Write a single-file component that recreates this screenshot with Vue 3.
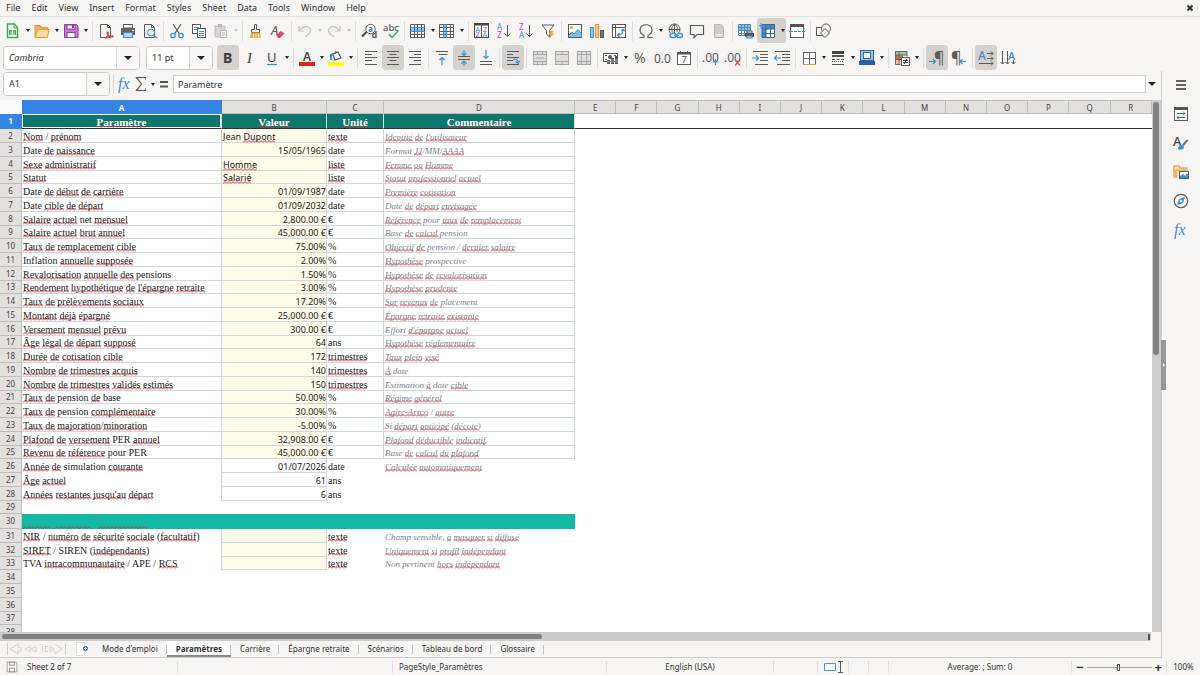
<script setup>
const menus = ['File', 'Edit', 'View', 'Insert', 'Format', 'Styles', 'Sheet', 'Data', 'Tools', 'Window', 'Help']

const G = '#5a5a5a'
const B = '#3d8fd1'
const line = (d, c = G, w = 1) => `<path d="${d}" fill="none" stroke="${c}" stroke-width="${w}"/>`
const fill = (d, c) => `<path d="${d}" fill="${c}"/>`
const rect = (x, y, w, h, f = 'none', s = 'none') => `<rect x="${x}" y="${y}" width="${w}" height="${h}" fill="${f}" stroke="${s}"/>`
const txt = (t, x, y, size, c = G, extra = '') => `<text x="${x}" y="${y}" font-size="${size}" fill="${c}" font-family="Noto Sans, sans-serif" ${extra}>${t}</text>`
const gridLines = line('M.5 1.500h14v13H.5zM.5 4.500h14M.5 8.500h14M.5 11.500h14M4.500 1.500v13M7.500 1.500v13M11.500 1.500v13')
const fx = txt('fx', 1, 13, 16, B, 'font-style="italic" style="font-family:Liberation Serif,serif"')

const icons = {
  new: line('M2.500 1h7l3 3.500v10h-10z', '#3faa5b', 1.5) + line('M9 1v4h4', '#3faa5b') + rect(4, 7, 7, 5, '#43a85a') + line('M5 9h5M5 11h5M7.500 7v5', '#fff', 0.7) ,
  open: fill('M1 2h5l2 2h6v10H1z', '#f3ae55') + fill('M3 6h12l-1.500 8.500H1z', '#fbdca8') + line('M.8 2.500h5l2 2h6V6M3.500 6.500h11.500l-1.500 8H1.500zM1 2.500v12', '#e2993e'),
  save: fill('M1.500 1.500h12l1.500 1.500v12H1.500z', '#c67bd0') + line('M1.500 1.500h12l1.500 1.500v11.500H1.500z', '#8d3f9a') + rect(4, 2, 8, 4, '#fff', '#8d3f9a') + rect(4, 9.5, 8, 5, '#fff', '#8d3f9a') + rect(9, 2, 2, 3, '#8d3f9a'),
  pdf: line('M2.500 1.500h7l3 3v10h-10zM9.500 1.500v3h3') + line('M7 15c3-2 4-5 3-6-1-.6-1.500 1 0 3 1.500 1.600 4 2.500 5 1.500s-3-1-8 2', '#d9434e', 1.200),
  print: fill('M1 5h14v7H1z', '#616568') + rect(3.5, 1.5, 9, 3.5, '#fff', G) + rect(3.5, 9.5, 9, 5, '#b9dcf5', B) + rect(12, 7, 2, 1, '#fff'),
  preview: line('M2.500 1.500h7l3 3v10h-10zM9.500 1.500v3h3') + `<circle cx="9" cy="9.500" r="3.500" fill="#dceefa" stroke="${B}"/>` + line('M11.500 12l3.500 3', B, 1.500),
  cut: line('M4 1l6.500 10M12 1L5.500 11', G, 1.200) + `<circle cx="4" cy="12.500" r="2.200" fill="none" stroke="${B}" stroke-width="1.300"/><circle cx="12" cy="12.500" r="2.200" fill="none" stroke="${B}" stroke-width="1.300"/>`,
  copy: rect(1.5, 1.5, 8, 9, '#fff', G) + line('M3 4.500h5M3 6.500h5', B) + rect(6.5, 5.5, 8, 9, '#fff', G) + line('M8 8.500h5M8 10.500h5M8 12.500h5', B),
  paste: rect(2, 3, 10, 11, '#d6d4d2', '#c3c1bf') + rect(5, 1, 4, 3, '#b9b7b5') + rect(7.5, 7.5, 6, 7, '#f2f1f0', '#bbb9b7') + line('M9 10h3M9 12h3', '#c0bebc'),
  brush: line('M6.500 1.500h2v5h3v3h-8v-3h3z') + fill('M3 9.500h9l1 5.500H2z', '#f1ac4f') + line('M5.500 11v3.500M8 11v3.500M10.500 11v3.500', '#fff', 0.7),
  clear: txt('A', 1, 11.500, 13, G, 'font-style="italic"') + fill('M6 12l5-4 3.500 2.500L10 15H8z', '#dd4b57'),
  undo: line('M2 3v5h5M2.500 7.500C6 3 11 2.500 13 5.500c2 3.500-1 6-5 8.500', '#c6c4c2', 1.200),
  redo: line('M14 3v5H9M13.500 7.500C10 3 5 2.500 3 5.500c-2 3.500 1 6 5 8.500', '#c6c4c2', 1.200),
  find: `<circle cx="9.500" cy="6" r="4.700" fill="#fff" stroke="${G}"/>` + line('M5.500 9L1 13.500', '#444', 2) + txt('a', 7, 9, 8, B, 'font-weight="bold"') + txt('d', 10.500, 15, 9, G, 'font-weight="bold"'),
  abc: txt('abc', 0, 8, 9.5, G, 'font-weight="500"') + line('M6 11l3 3.500L15 8', '#3fb269', 1.500),
  row: rect(1, 4, 14, 4, '#8cc6ef') + gridLines + line('M.5 4.500h14M.5 8.500h14', B),
  col: rect(4, 1, 4, 14, '#8cc6ef') + gridLines + line('M4.500 1v14M7.500 1v14', B),
  sort: rect(0.5, 0.5, 14, 14, '#fff', '#444') + line('M.5 1.500h14', '#444', 2) + line('M7.500 1v14') + txt('A', 1.500, 8.500, 7, B) + txt('Z', 1.800, 14, 7, '#b14ac0') + txt('Z', 9, 8.500, 7, '#b14ac0') + txt('A', 8.700, 14, 7, B),
  az: txt('A', 1, 7, 8, B) + txt('Z', 1, 15, 8, '#b14ac0') + line('M11.500 2v11.500M8.500 10.500l3 3 3-3'),
  za: txt('Z', 1, 7, 8, '#b14ac0') + txt('A', 1, 15, 8, B) + line('M11.500 2v11.500M8.500 10.500l3 3 3-3'),
  filter: line('M2 2h12L9.500 7.500V14L6.500 11V7.500z') + fill('M10 8h4l-2 2.500h2.500L9 15.500l1.500-4H8.500z', '#f1a03d'),
  image: rect(1.5, 1.5, 13, 13, '#fff', G) + fill('M2 14V12l3-3 2 2 4-4.500 3.500 4V14z', '#7dbcec') + line('M2 12l3-3 2 2 4-4.500 3.500 4', B) + `<circle cx="4.500" cy="4.500" r="1.500" fill="#f1a03d"/>`,
  chart: rect(1.5, 4.5, 3, 10, '#8cc6ef', B) + rect(6.5, 1.5, 3, 13, '#fbc787', '#e2993e') + rect(11.5, 7.5, 3, 7, '#777', '#555'),
  pivot: rect(1.5, 1.5, 13, 13, '#fff', G) + line('M1.500 4.500h13M4.500 1.500v13') + line('M7 12c4 0 5-2 5-5M10 8l2-2 2 2M8.500 10l-2 2 2 2', B, 1.200),
  omega: line('M1.500 14.500h4.500v-2C3 11 2 9 2 7c0-7 12-7 12 0 0 2-1 4-4 5.500v2h4.500', G, 1.200),
  link: `<circle cx="7.500" cy="6.500" r="5.500" fill="none" stroke="${G}"/>` + line('M2 6.500h11M7.500 1v9M7.500 1c-4 3-3 8-1 9M7.500 1c4 3 3 6 2.500 8') + rect(3, 10, 13, 6, '#f6f5f4') + `<rect x="3" y="10.500" width="6" height="4" rx="2" fill="none" stroke="${B}" stroke-width="1.300"/><rect x="9.500" y="10.500" width="6" height="4" rx="2" fill="none" stroke="${B}" stroke-width="1.300"/>` + line('M7 12.500h5', B),
  comment: line('M1.500 2.500h13v9H8l-3 3v-3H1.500z', G, 1.200),
  header: fill('M3 1h7l3 3v11H3z', '#cfcdcb') + line('M3.500 1.500h6l3 3v10h-9z', '#bbb9b7') + line('M5 11.500h6M5 13h6', '#f0efee'),
  printarea: rect(1, 1, 12, 6, '#8cc6ef') + line('M.5 1.500h12v11H.5zM.5 4.500h12M.5 7.500h12M.5 10.500h12M3.500 1v11M6.500 1v11M9.500 1v11', '#4f86b3') + fill('M7 10h9v4H7z', '#555') + rect(9, 8, 5, 2, '#fff', '#555') + rect(9, 13, 5, 2, '#b9dcf5', B),
  freeze: rect(2, 2, 12, 4, '#3d8fd1') + rect(2, 2, 4, 13, '#3d8fd1') + rect(6, 6, 9, 9, '#fff') + line('M2 1.500h12.500v13H2zM2 6h12.500M2 10.500h12.500M6 2v13M10.500 2v13', '#39678e') + line('M1 0v5M-1 2.500h5', B),
  split: rect(1.5, 1.5, 13, 13, '#fff', G) + rect(1, 1, 14, 3, '#555') + line('M0 8.500h16', B, 1) + line('M4 8.500h1M8 8.500h1M12 8.500h1', '#fff', 1.500),
  shapes: rect(0.5, 4.5, 8, 8, '#f6f5f4', G) + `<circle cx="10" cy="5.500" r="4.500" fill="#f6f5f4" stroke="${G}"/>` + `<path d="M9 5.500l4.500 4.500-4.500 4.500-4.500-4.500z" fill="#f6f5f4" stroke="${G}"/>`,
  bold: txt('B', 3, 13, 14, '#3a3a3a', 'font-weight="bold"'),
  italic: txt('I', 5, 13, 15, '#444', 'font-style="italic" style="font-family:Liberation Serif,serif"'),
  underline: txt('U', 3, 12, 13, '#444') + line('M3 14.500h10', B, 1.300),
  fontcolor: txt('A', 4, 10.500, 12, '#444', 'font-weight="600"') + rect(0, 12, 16, 4, '#d5281e'),
  highlight: line('M5 4l5-2 3 6-6 2zM7 4l1-3', G, 1.200) + line('M3 4v6M3 4l3 1', B, 2) + rect(0, 12, 16, 4, '#ffff00'),
  left: line('M2 1.500h12M2 4.500h7M2 7.500h12M2 10.500h7M2 14.500h12'),
  center: line('M2 1.500h12M4.500 4.500h7M2 7.500h12M4.500 10.500h7M2 14.500h12'),
  right: line('M2 1.500h12M7 4.500h7M2 7.500h12M7 10.500h7M2 14.500h12'),
  top: line('M2 1.500h12M4.500 4.500h9') + line('M8 15.500V8M5.500 10L8 7.500 10.500 10', B, 1.200),
  middle: line('M2 6.500h12M2 9.500h12') + line('M8 0v5M5.500 3L8 5.500 10.500 3M8 16v-5M5.500 13.500L8 11l2.500 2.500', B, 1.200),
  bottom: line('M2 11.500h12M2 14.500h12') + line('M8 0v8M5.500 6L8 8.500 10.500 6', B, 1.200),
  wrap: line('M2 1.500h12M2 4.500h6M2 7.500h12M2 10.500h6M2 14.500h12') + line('M8 9.500c3-1 5 0 5 3M10.500 11.500l2.500 2 2-2.500', B, 1.200),
  merge: rect(1.5, 1.5, 13, 13, '#dedddb', '#aaa8a6') + line('M1 4.500h14M1 11.500h14M5.500 1v4M10.500 1v4M5.500 11.500v4M10.500 11.500v4M4 8h8', '#aaa8a6'),
  mergein: rect(1.5, 1.5, 13, 13, '#dedddb', '#aaa8a6') + line('M1 4.500h14M1 11.500h14M8 1v4M8 11.500v4', '#aaa8a6'),
  unmerge: rect(1.5, 1.5, 13, 13, '#dedddb', '#aaa8a6') + line('M1 4.500h14M1 11.500h14M5.500 1v14M10.500 1v14', '#aaa8a6'),
  currency: rect(0.5, 3.5, 14, 8, '#fff', G) + `<circle cx="7" cy="7" r="2" fill="${G}"/>` + line('M2 5.500h2M11 5.500h2M2 9.500h2') + fill('M4 10h3v4H4zM8 8h3v6H8zM12 6h3v8h-3z', '#555') + line('M4 12h11M4 10h11', '#ddd', 0.6),
  percent: txt('%', 2, 13, 14),
  number: txt('0.0', 0, 13, 12),
  date: rect(1.5, 2.5, 13, 12, '#fff', G) + line('M1 3.500h14', '#555', 2) + line('M4.500 1v3M11.500 1v3', '#555') + txt('7', 5.500, 13, 9.500, '#444'),
  adddec: txt('.00', -1, 12, 12) + line('M12.500 9v6M9.500 12h6', B, 1.200),
  deldec: txt('.00', -1, 12, 12) + line('M10 10l5 5.500M15 10l-5 5.500', '#dd4b57', 1.200),
  indent: line('M1 1.500h15M8 4.500h8M8 7.500h8M8 10.500h8M3 14.500h13') + line('M0 8h6M4 5.500L6.500 8 4 10.500', B, 1.200),
  outdent: line('M1 1.500h15M8 4.500h8M8 7.500h8M8 10.500h8M3 14.500h13') + line('M7 8H1M3 5.500L.5 8 3 10.500', B, 1.200),
  borders: rect(2.5, 2.5, 12, 12, '#fff') + line('M2 2.500h12.500M2 8.500h12.500M2.500 2v12M8.500 2v12M14.500 2v12', '#666') + line('M2 14.500h13', '#e2993e'),
  linestyle: line('M2 2.500h12', '#444', 3) + line('M2 6h12', '#555', 2) + line('M2 9.500h3M6.500 9.500h3M11 9.500h3', '#555') + line('M2 11.500h1M4 11.500h1M6 11.500h1M8 11.500h1M10 11.500h1M12 11.500h1M2 14.500h12', '#555'),
  bordercolor: rect(1.5, 0.5, 13, 10, '#8cc6ef', '#39678e') + rect(4.5, 2.5, 7, 6, '#f6f5f4', '#39678e') + rect(0, 11, 16, 4, '#2a5da8'),
  cond: rect(1, 1, 12, 4, '#8fd09f') + rect(1, 5, 8, 4, '#e8604c') + rect(1, 9, 5, 5, '#fbc787') + line('M1 1.500h12v5M1.500 1v13.500h5M1 5h12M1 9.500h6M5 1v13', '#666') + rect(7.5, 7.5, 8, 8, '#fff', G) + line('M9 10.500h5M9 12.500h5M13 9l-3 5', '#444'),
  ltr: txt('¶', 5, 13, 16) + line('M0 11.500h6M4 9l2.500 2.500L4 14', B, 1.200),
  rtl: txt('¶', 0, 13, 16) + line('M15 11.500H9M11.500 9L9 11.500l2.500 2.500', B, 1.200),
  horiz: txt('A', 0, 10, 12, B, 'font-weight="500"') + line('M9 3.500h6M13 1.500l2 2-2 2M9 8.500h6M13 6.500l2 2-2 2M1 13.500h14M13 11.500l2 2-2 2'),
  vert: txt('A', 8, 9.500, 11, B, 'font-weight="500"') + line('M2.500 1v13M.5 12l2 2 2-2M7.500 1v13M5.500 12l2 2 2-2M13.500 10v4M11.500 12l2 2 2-2'),
  fx,
  sigma: line('M12.500 3.500v-2H3.500L8.500 8l-5 6.500h9v-2', G, 1.200),
  equals: line('M4 6h8M4 10.500h8', '#555', 1.800),
  burger: line('M3 4h10M3 8h10M3 12h10', '#333', 1.600),
  props: rect(1.5, 1.5, 13, 13, '#fff', G) + rect(1, 1, 14, 3, '#555') + line('M4 7.500h8M4 11.500h8') + line('M10 5.500l2 2-2 2M6 9.500l-2 2 2 2', B),
  styles: txt('A', 0, 11, 13, '#444', 'font-weight="500"') + line('M15 5l-5 6M14 5l-4.500 5', '#777', 1.200) + fill('M5 14c0-3 2-4 4-4l2 2c0 3-4 3-6 2z', B),
  gallery: fill('M1 2h5l1 2h7v10H1z', '#fbdca8') + line('M1 13.500V2h5l1 2h7.500M3 14V6h12', '#e2993e', 1.200) + rect(6.5, 7.5, 9, 7, '#fff', '#39678e') + fill('M7 14v-2l3-2 2 2 2-3 1 2v3z', B),
  compass: `<circle cx="8" cy="8" r="6.700" fill="#fff" stroke="${G}" stroke-width="1.200"/>` + fill('M12 4l-2 6-6 2 2-6z', B) + fill('M8 6.500L9.500 8 8 9.500 6.500 8z', '#fff'),
  docsave: line('M1.500 1.500h12l1 1v12h-13z', '#888') + rect(4.500, 1.500, 7, 4, 'none', '#888') + rect(4.500, 9.500, 7, 5, 'none', '#888'),
}

const row1 = [
  'New:new', '>', 'Open:open', '>', 'Save:save', '>', '|', 'Export as PDF:pdf', 'Print:print', 'Print Preview:preview', '|',
  'Cut:cut', 'Copy:copy', 'Paste:paste', '>off', '|', 'Clone Formatting:brush', 'Clear Formatting:clear', '|',
  'Undo:undo', '>off', 'Redo:redo', '>off', '|', 'Find and Replace:find', 'Spelling:abc', '|', 'Row:row', '>', 'Column:col', '>', '|',
  'Sort:sort', 'Sort Ascending:az', 'Sort Descending:za', 'AutoFilter:filter', '|', 'Image:image', 'Chart:chart', 'Pivot Table:pivot', '|',
  'Special Character:omega', '>', 'Hyperlink:link', 'Comment:comment', 'Headers and Footers:header', '|',
  'Print Area:printarea', 'Freeze Rows and Columns:freeze:on', '>on', 'Split Window:split', '|', 'Draw Functions:shapes',
].map(parse)
const row2 = [
  'Bold:bold:on', 'Italic:italic', 'Underline:underline', '>', '|', 'Font Color:fontcolor', '>', 'Highlighting:highlight', '>', '|',
  'Align Left:left', 'Center:center:on', 'Align Right:right', '|', 'Align Top:top', 'Center Vertically:middle:on', 'Align Bottom:bottom', '|',
  'Wrap Text:wrap:on', '|', 'Merge and Center:merge', 'Merge Cells:mergein', 'Unmerge Cells:unmerge', '|',
  'Currency:currency', '>', 'Percent:percent', 'Number:number', 'Date:date', '|', 'Add Decimal:adddec', 'Delete Decimal:deldec', '|',
  'Increase Indent:indent', 'Decrease Indent:outdent', '|', 'Borders:borders', '>', 'Border Style:linestyle', '>', 'Border Color:bordercolor', '>', '|',
  'Conditional:cond', '>', '|', 'Left-To-Right:ltr:on', 'Right-To-Left:rtl', '|', 'Horizontal Text:horiz:on', 'Vertical Text:vert',
].map(parse)

function parse(s) {
  if (s === '|') return { kind: 'sep' }
  if (s[0] === '>') return { kind: 'arrow', state: s.slice(1) }
  const [label, icon, state] = s.split(':')
  return { kind: 'button', label, icon, state }
}

// Square brackets enclose the words flagged by the spell checker.
const data = {
  2: ['[Nom] / [prénom]', 'Jean [Dupont]', '[texte]', '[Identité] [de] [l\'utilisateur]'],
  3: ['Date [de] [naissance]', '15/05/1965', 'date', 'Format [JJ]/MM/[AAAA]'],
  4: ['[Sexe] [administratif]', '[Homme]', '[liste]', '[Femme] [ou] [Homme]'],
  5: ['[Statut]', '[Salarié]', '[liste]', '[Statut] [professionnel] [actuel]'],
  6: ['Date [de] [début] [de] [carrière]', '01/09/1987', 'date', '[Première] [cotisation]'],
  7: ['Date [cible] [de] [départ]', '01/09/2032', 'date', 'Date [de] [départ] [envisagée]'],
  8: ['[Salaire] [actuel] net [mensuel]', '2,800.00 €', '€', '[Référence] pour [taux] [de] [remplacement]'],
  9: ['[Salaire] [actuel] [brut] [annuel]', '45,000.00 €', '€', 'Base [de] [calcul] pension'],
  10: ['[Taux] [de] [remplacement] [cible]', '75.00%', '%', '[Objectif] [de] pension / [dernier] [salaire]'],
  11: ['Inflation [annuelle] [supposée]', '2.00%', '%', '[Hypothèse] prospective'],
  12: ['[Revalorisation] [annuelle] [des] pensions', '1.50%', '%', '[Hypothèse] [de] [revalorisation]'],
  13: ['[Rendement] [hypothétique] [de] [l\'épargne] [retraite]', '3.00%', '%', '[Hypothèse] [prudente]'],
  14: ['[Taux] [de] [prélèvements] [sociaux]', '17.20%', '%', '[Sur] [revenus] [de] placement'],
  15: ['[Montant] [déjà] [épargné]', '25,000.00 €', '€', '[Épargne] [retraite] [existante]'],
  16: ['[Versement] [mensuel] [prévu]', '300.00 €', '€', 'Effort [d\'épargne] [actuel]'],
  17: ['[Âge] [légal] [de] [départ] [supposé]', '64', 'ans', '[Hypothèse] [réglementaire]'],
  18: ['[Durée] [de] [cotisation] [cible]', '172', '[trimestres]', '[Taux] [plein] [visé]'],
  19: ['[Nombre] [de] [trimestres] [acquis]', '140', '[trimestres]', '[À] date'],
  20: ['[Nombre] [de] [trimestres] [validés] [estimés]', '150', '[trimestres]', 'Estimation [à] date [cible]'],
  21: ['[Taux] [de] pension [de] base', '50.00%', '%', '[Régime] [général]'],
  22: ['[Taux] [de] pension [complémentaire]', '30.00%', '%', '[Agirc-Arrco] / [autre]'],
  23: ['[Taux] [de] [majoration]/[minoration]', '-5.00%', '%', 'Si [départ] [anticipé] ([décote])'],
  24: ['[Plafond] [de] [versement] PER [annuel]', '32,908.00 €', '€', '[Plafond] [déductible] [indicatif]'],
  25: ['[Revenu] [de] [référence] pour PER', '45,000.00 €', '€', 'Base [de] [calcul] [du] [plafond]'],
  26: ['[Année] [de] simulation [courante]', '01/07/2026', 'date', '[Calculée] [automatiquement]'],
  27: ['[Âge] [actuel]', '61', 'ans', ''],
  28: ['[Années] [restantes] [jusqu\'au] [départ]', '6', 'ans', ''],
  31: ['[NIR] / [numéro] [de] [sécurité] [sociale] ([facultatif])', '', '[texte]', 'Champ sensible, [à] [masquer] [si] [diffusé]'],
  32: ['[SIRET] / SIREN ([indépendants])', '', '[texte]', '[Uniquement] [si] [profil] [indépendant]'],
  33: ['TVA [intracommunautaire] / APE / [RCS]', '', '[texte]', 'Non pertinent [hors] [indépendant]'],
}
const rows = Array.from({ length: 37 }, (_, i) => {
  const n = i + 2
  return { n, cells: data[n] || ['', '', '', ''] }
})
const split = s => s.split(/(\[[^\]]*\])/).filter(Boolean).map(p => p[0] === '[' ? { t: p.slice(1, -1), bad: true } : { t: p })
const cellClass = (n, c) => ({
  a: c === 0, b: c === 1, c: c === 2, d: c === 3,
  num: c === 1 && /^[-\d]/.test(data[n]?.[1] || ''),
  grid: n <= 25 || (c === 1 && (n <= 28 || (n >= 31 && n <= 33))),
  edge: c === 0 && ((n >= 26 && n <= 28) || (n >= 31 && n <= 33)),
  input: c === 1 && (n <= 25 || (n >= 31 && n <= 33)),
})
const otherCols = 'EFGHIJKLMNOPQR'.split('')
const headings = ['Paramètre', 'Valeur', 'Unité', 'Commentaire']
const tabs = ["Mode d'emploi", 'Paramètres', 'Carrière', 'Épargne retraite', 'Scénarios', 'Tableau de bord', 'Glossaire']
const side = [['Sidebar Settings', 'burger'], ['Properties', 'props'], ['Styles', 'styles'], ['Gallery', 'gallery'], ['Navigator', 'compass'], ['Functions', 'fx']]
</script>

<template>
  <div class="app">
    <nav class="menubar">
      <button v-for="m in menus" :key="m">{{ m }}</button>
      <button class="close" aria-label="Close document"><svg viewBox="0 0 8 8"><path d="M1.500 1.500l5 5M6.500 1.500l-5 5" stroke="#333" stroke-width="2" /></svg></button>
    </nav>

    <div class="toolbar first">
      <template v-for="(t, i) in row1" :key="i">
        <i v-if="t.kind === 'sep'" class="sep"></i>
        <button v-else-if="t.kind === 'arrow'" class="arrow" :class="t.state" aria-label="More options"></button>
        <button v-else class="tool" :class="t.state" :aria-label="t.label"><svg viewBox="0 0 16 16" v-html="icons[t.icon]"></svg></button>
      </template>
    </div>

    <div class="toolbar second">
      <div class="combo font"><input value="Cambria" aria-label="Font name"><button aria-label="Choose font"></button></div>
      <div class="combo size"><input value="11 pt" aria-label="Font size"><button aria-label="Choose size"></button></div>
      <template v-for="(t, i) in row2" :key="i">
        <i v-if="t.kind === 'sep'" class="sep"></i>
        <button v-else-if="t.kind === 'arrow'" class="arrow" :class="t.state" aria-label="More options"></button>
        <button v-else class="tool" :class="t.state" :aria-label="t.label"><svg viewBox="0 0 16 16" v-html="icons[t.icon]"></svg></button>
      </template>
    </div>

    <div class="body">
      <main class="main">
        <div class="formula">
          <div class="combo name"><input value="A1" aria-label="Name box"><button aria-label="Choose range"></button></div>
          <i class="sep"></i>
          <button class="tool narrow" aria-label="Function wizard"><svg viewBox="0 0 16 16" v-html="icons.fx"></svg></button>
          <button class="tool narrow" aria-label="Select function"><svg viewBox="0 0 16 16" v-html="icons.sigma"></svg></button>
          <button class="arrow" aria-label="More functions"></button>
          <button class="tool narrow" aria-label="Formula"><svg viewBox="0 0 16 16" v-html="icons.equals"></svg></button>
          <input class="content" value="Paramètre" aria-label="Input line">
          <button class="expand" aria-label="Expand formula bar"></button>
        </div>

        <div class="work">
          <div class="sheet">
            <table>
              <colgroup>
                <col class="w-head"><col class="w-a"><col class="w-b"><col class="w-c"><col class="w-d">
                <col v-for="c in otherCols" :key="c">
              </colgroup>
              <thead>
                <tr>
                  <td class="corner"></td>
                  <th class="head sel">A</th>
                  <th v-for="c in ['B', 'C', 'D', ...otherCols]" :key="c" class="head">{{ c }}</th>
                </tr>
                <tr class="titles">
                  <th class="rowhead sel">1</th>
                  <th v-for="(h, i) in headings" :key="h" class="title" :class="{ current: i === 0 }"><span class="bad">{{ h }}</span></th>
                  <td :colspan="otherCols.length"></td>
                </tr>
              </thead>
              <tbody>
                <tr v-for="r in rows" :key="r.n" :class="{ section: r.n === 30 }">
                  <th class="rowhead">{{ r.n }}</th>
                  <td v-if="r.n === 30" colspan="4" class="band">
                    <svg width="128" height="3" viewBox="0 0 128 3"><path d="M0 2.500l2-2 2 2 2-2 2 2 2-2 2 2 2-2 2 2 2-2 2 2 2-2 2 2 2-2 2 2M32 2.500l2-2 2 2 2-2 2 2 2-2 2 2 2-2 2 2 2-2 2 2 2-2 2 2 2-2 2 2 2-2 2 2 2-2 2 2M75 2.500l2-2 2 2 2-2 2 2 2-2 2 2 2-2 2 2 2-2 2 2 2-2 2 2 2-2 2 2 2-2 2 2 2-2 2 2 2-2 2 2 2-2 2 2 2-2 2 2 2-2" /></svg>
                  </td>
                  <template v-else>
                    <td v-for="(cell, c) in r.cells" :key="c" :class="cellClass(r.n, c)"><template v-for="(p, k) in split(cell)" :key="k"><span v-if="p.bad" class="bad">{{ p.t }}</span><template v-else>{{ p.t }}</template></template></td>
                  </template>
                  <td :colspan="otherCols.length"></td>
                </tr>
              </tbody>
            </table>
          </div>
          <div class="vscroll"><div></div></div>
        </div>
        <div class="hscroll"><div></div><i></i></div>

        <div class="tabs">
          <svg class="navs" viewBox="0 0 60 14" aria-hidden="true"><path d="M1.500 1v12M12 2L4 7l8 5V9h3V5h-3zM24 4l-5 3 5 3zM30 4l-5 3 5 3zM36.500 4v6M39.500 4v6M42 4.500h-3M42 9.500h-3M44 4l4 3-4 3zM49 2l7 5-7 5V9M59.500 1v12" /></svg>
          <button class="add" aria-label="Insert sheet"><svg viewBox="0 0 14 14"><path d="M1.500 .5h8v13h-8z" fill="#fff" stroke="#ddd" /><circle cx="10.500" cy="6.500" r="2.500" fill="#3b78c4" /><path d="M9 6.500h3M10.500 5v3" stroke="#fff" /></svg></button>
          <button v-for="t in tabs" :key="t" class="tab" :class="{ active: t === 'Paramètres' }">{{ t }}</button>
        </div>
      </main>

      <aside class="side">
        <button class="grip" aria-label="Show sidebar"></button>
        <button v-for="s in side" :key="s[0]" class="sidebtn" :aria-label="s[0]"><svg viewBox="0 0 16 16" v-html="icons[s[1]]"></svg></button>
      </aside>
    </div>

    <footer class="status">
      <div class="cell sheetno"><svg viewBox="0 0 16 16" v-html="icons.docsave"></svg>Sheet 2 of 7</div>
      <div class="cell"></div>
      <div class="cell pagestyle">PageStyle_Paramètres</div>
      <div class="cell mid">English (USA)</div>
      <div class="cell"></div>
      <div class="cell mid"><svg class="mode" viewBox="0 0 20 12"><path d="M1.500 2.500h11v7h-11z" fill="#fff" stroke="#4a9ace" /><path d="M15 .5h5M17.500 1v10M15 11.500h5" fill="none" stroke="#555" /></svg></div>
      <div class="cell"></div>
      <div class="cell"></div>
      <div class="cell mid">Average: ; Sum: 0</div>
      <div class="cell zoomer"><button aria-label="Zoom out">−</button><input type="range" min="0" max="100" value="49" aria-label="Zoom"><button aria-label="Zoom in">+</button></div>
      <div class="cell mid">100%</div>
    </footer>
  </div>
</template>

<style>
html, body { margin: 0; background: #f6f5f4; }
</style>

<style scoped>
* { box-sizing: border-box; }
.app { display: flex; flex-direction: column; height: 100vh; overflow: hidden; background: #f6f5f4; color: #333; font: 9px/12px "Noto Sans", sans-serif; }
button { border: 0; padding: 0; margin: 0; background: none; color: inherit; font: inherit; }
input { font: inherit; color: inherit; min-width: 0; border: 0; padding: 0; margin: 0; background: #fff; outline: none; }
svg { display: block; overflow: visible; }
.menubar { display: flex; flex: none; align-items: center; gap: 11px; height: 17px; padding: 0 6px; border-bottom: 1px solid #e4e2e0; }
.close { margin-left: auto; }
.close svg { width: 8px; height: 8px; }
.toolbar { display: flex; flex: none; align-items: center; padding-left: 2px; }
.first { height: 27px; }
.second { height: 27px; padding-left: 3px; }
.tool { display: flex; flex: none; align-items: center; justify-content: center; width: 22px; height: 25px; border-radius: 3px; }
.tool svg { width: 16px; height: 16px; }
.narrow { width: 16px; }
.on { background: #d5d1cd; }
.arrow { display: flex; flex: none; align-items: center; justify-content: center; width: 7px; height: 25px; }
.tool.on:has(+ .arrow.on) { border-radius: 3px 0 0 3px; }
.arrow.on { border-radius: 0 3px 3px 0; }
.arrow::before, .expand::before, .combo button::before { content: ""; border: 2px solid transparent; border-top: 3px solid #222; border-bottom: 0; }
.arrow.off::before { border-top-color: #c3c1bf; }
.sep { flex: none; width: 5px; height: 20px; background: linear-gradient(#dddbd9, #dddbd9) center / 1px 100% no-repeat; }
.arrow + .sep { width: 6px; }
.combo { display: flex; flex: none; height: 24px; border: 1px solid #cdc9c5; border-radius: 4px; overflow: hidden; background: #fff; }
.combo input { flex: 1; padding-left: 5px; }
.combo button { display: flex; flex: none; width: 23px; align-items: center; justify-content: center; border-left: 1px solid #d8d5d2; background: #f8f7f6; }
.combo button::before, .expand::before { border-width: 4px; border-bottom-width: 0; }
.font { width: 137px; margin-right: 6px; font-style: italic; }
.size { width: 67px; margin-right: 4px; }
.name { width: 107px; }
.body { display: flex; flex: 1; min-height: 0; }
.main { display: flex; flex: 1; flex-direction: column; min-width: 0; }
.formula { display: flex; flex: none; align-items: center; height: 29px; padding: 0 0 3px 3px; }
.formula .sep { margin: 0 1px; }
.content { flex: 1; height: 18px; margin: 0 1px; padding-left: 4px; border: 1px solid #d2cfcc; }
.expand { display: flex; justify-content: center; width: 10px; margin-right: 4px; }
.work { display: flex; flex: 1; min-height: 0; }
.sheet { flex: 1; min-width: 0; overflow: hidden; background: #fff; }
table { width: 100%; table-layout: fixed; border-collapse: separate; border-spacing: 0; }
.w-head { width: 22px; }
.w-a { width: 200px; }
.w-b { width: 105px; }
.w-c { width: 57px; }
.w-d { width: 191px; }
tr { height: 14px; }
tbody tr:nth-child(4n) { height: 13px; }
tr.titles, tbody tr.section { height: 15px; }
td, th { padding: 0 1px; line-height: 12px; white-space: nowrap; vertical-align: bottom; text-align: left; }
.corner { background: #fafafa; }
.head, .rowhead { padding: 0; border: solid #bfbdbb; border-width: 0 1px 1px 0; background: #e2e1e0; color: #444; font-weight: 400; font-size: 8px; text-align: center; vertical-align: middle; }
.head { border-top-width: 1px; line-height: 11px; }
.head.sel, .rowhead.sel { background: #3584e4; border-color: #3584e4; color: #fff; font-weight: 700; }
.titles td, .title { border-bottom: 1px solid #333; }
.title { border-right: 1px solid #d4e7e4; background: #0f766e; color: #fff; font: 700 11px/12px "Liberation Serif", serif; text-align: center; }
.current { box-shadow: inset 0 0 0 1px #fff; }
.a, .c { color: #222; font-family: "Liberation Serif", serif; font-size: 10px; }
.d { color: #7b8190; font: italic 9px/12px "Liberation Serif", serif; }
.b { color: #222; }
.num { text-align: right; }
.grid { box-shadow: inset -1px -1px #cfd6dd; }
.edge { box-shadow: inset -1px 0 #cfd6dd; }
.input { background: #fefbe8; }
.bad { background: url("data:image/svg+xml,%3Csvg xmlns='http://www.w3.org/2000/svg' width='4' height='3'%3E%3Cpath d='M0 2.500L2 .5L4 2.500' fill='none' stroke='%23dd2a2a' stroke-width='1'/%3E%3C/svg%3E") left bottom / 4px 3px repeat-x; }
.band { background: #14b8a6; }
.band path { fill: none; stroke: #8b5a50; stroke-width: 1; }
.vscroll { flex: none; width: 9px; padding: 2px 2px 2px 1px; background: #cdcdcd; }
.vscroll div { height: 48%; border-radius: 3px; background: #828282; }
.hscroll { display: flex; flex: none; align-items: center; justify-content: space-between; height: 9px; margin-right: 10px; padding-left: 2px; background: #cbcbcb; }
.hscroll div { width: 47%; height: 5px; border-radius: 3px; background: #808080; }
.hscroll i { width: 2px; height: 6px; margin-right: 1px; background: #555; }
.tabs { display: flex; flex: none; height: 17px; padding-left: 6px; border-bottom: 1px solid #cfcdcb; font-size: 8px; }
.navs { width: 60px; height: 14px; margin-top: 1px; fill: none; stroke: #d2d0ce; }
.add { width: 27px; padding-left: 9px; }
.add svg { width: 14px; height: 14px; }
.tab { position: relative; padding: 1px 9px 0; border-bottom: 2px solid transparent; }
.tab::after { content: ""; position: absolute; right: 0; top: 4px; height: 9px; border-right: 1px solid #c4c2c0; }
.tab.active { background: #fff; border-bottom-color: #888; font-weight: 700; }
.side { position: relative; display: flex; flex: none; flex-direction: column; align-items: center; gap: 5px; width: 39px; padding-top: 2px; border-left: 1px solid #cfcdcb; }
.sidebtn { display: flex; align-items: center; justify-content: center; width: 24px; height: 24px; }
.sidebtn svg { width: 16px; height: 16px; }
.grip { position: absolute; left: -1px; top: 0; bottom: 0; margin: auto 0; width: 5px; height: 50px; background: #979797; }
.grip::before { content: ""; display: block; margin-left: 2px; border: 2px solid transparent; border-left-color: #fff; border-right: 0; }
.status { display: grid; flex: none; grid-template-columns: 178fr 215fr 214fr 167fr 44fr 31fr 20fr 20fr 183fr 95fr 33fr; align-items: center; height: 17px; padding-top: 1px; font-size: 8px; }
.cell { display: flex; align-items: center; min-width: 0; height: 12px; white-space: nowrap; border-right: 1px solid #e2e0de; }
.cell:last-child { border-right: 0; }
.sheetno { gap: 9px; padding-left: 6px; }
.sheetno svg { width: 12px; height: 12px; }
.pagestyle { padding-left: 6px; }
.mid { justify-content: center; }
.mode { width: 20px; height: 12px; }
.zoomer { gap: 3px; padding: 0 4px; }
.zoomer button { font-size: 13px; font-weight: 700; }
.zoomer input { flex: 1; width: 0; height: 10px; appearance: none; background: linear-gradient(#aaa, #aaa) center / 100% 1px no-repeat; }
.zoomer input::-webkit-slider-thumb { appearance: none; width: 3px; height: 7px; border: 1px solid #555; background: #fff; }
</style>
